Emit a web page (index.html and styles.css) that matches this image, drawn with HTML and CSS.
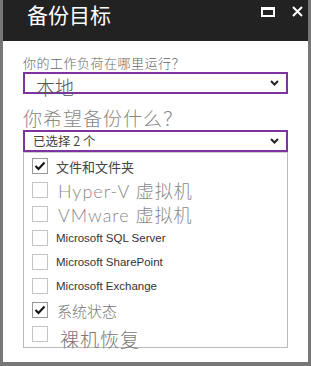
FILE: index.html
```html
<!DOCTYPE html>
<html lang="zh-CN">
<head>
    <meta charset="UTF-8" />
    <meta name="viewport" content="width=device-width, initial-scale=1.0" />
    <title>备份目标</title>
    <link rel="stylesheet" href="styles.css">
</head>
<body>
    <div class="window">
        <div class="titlebar">
            <h1>备份目标</h1>
            <div class="controls">
                <span class="maximize"></span>
                <svg class="close" width="11" height="11" viewBox="0 0 11 11">
                    <path d="M1 1 L10 10 M10 1 L1 10" stroke="#fff" stroke-width="2" fill="none" />
                </svg>
            </div>
        </div>
        <div class="content">
            <div class="label">你的工作负荷在哪里运行？</div>
            <div class="select select-big">
                <span class="value">本地</span>
                <svg class="chevron" width="9" height="6" viewBox="0 0 9 6">
                    <path d="M1 1 L4.5 4.5 L8 1" stroke="#222" stroke-width="2" fill="none" />
                </svg>
            </div>
            <div class="heading">你希望备份什么？</div>
            <div class="select select-small">
                <span class="value">已选择 2 个</span>
                <svg class="chevron" width="9" height="6" viewBox="0 0 9 6">
                    <path d="M1 1 L4.5 4.5 L8 1" stroke="#222" stroke-width="2" fill="none" />
                </svg>
            </div>
            <ul class="options">
                <li class="option checked"><span class="box"><svg width="14" height="14" viewBox="0 0 14 14"><path d="M2.5 7 L5.5 10 L11.5 3.5" stroke="#111" stroke-width="2" fill="none" /></svg></span><span class="text zh">文件和文件夹</span></li>
                <li class="option"><span class="box"></span><span class="text big">Hyper-V 虚拟机</span></li>
                <li class="option"><span class="box"></span><span class="text big">VMware 虚拟机</span></li>
                <li class="option"><span class="box"></span><span class="text en">Microsoft SQL Server</span></li>
                <li class="option"><span class="box"></span><span class="text en">Microsoft SharePoint</span></li>
                <li class="option"><span class="box"></span><span class="text en">Microsoft Exchange</span></li>
                <li class="option checked"><span class="box"><svg width="14" height="14" viewBox="0 0 14 14"><path d="M2.5 7 L5.5 10 L11.5 3.5" stroke="#111" stroke-width="2" fill="none" /></svg></span><span class="text mid">系统状态</span></li>
                <li class="option"><span class="box"></span><span class="text huge">裸机恢复</span></li>
            </ul>
        </div>
    </div>
</body>
</html>
```

FILE: styles.css
```css
body {
    margin: 0;
    padding: 0;
    background-color: #ffffff;
    font-family: "Noto Sans CJK SC", "Noto Sans", sans-serif;
}

.window {
    width: 311px;
    height: 366px;
    box-sizing: border-box;
    border: solid #777777;
    border-width: 0 3px 4px 3px;
    background-color: #ffffff;
}

.titlebar {
    height: 41px;
    background-color: #222222;
    display: flex;
    align-items: flex-start;
    padding: 0 5px 0 24px;
}

.titlebar h1 {
    margin: 0;
    font-size: 21px;
    font-weight: normal;
    line-height: 28px;
    color: #ffffff;
}

.controls {
    margin-left: auto;
    display: flex;
    align-items: flex-start;
    gap: 17px;
    padding-top: 6px;
}

.maximize {
    width: 10px;
    height: 5px;
    margin-top: 1px;
    border: 2px solid #ffffff;
    border-top-width: 3px;
}

.content {
    padding: 0 20px;
}

.label {
    margin-top: 13px;
    font-size: 13px;
    line-height: 18px;
    font-weight: 300;
    letter-spacing: 0.5px;
    color: #666666;
}

.select {
    height: 22px;
    box-sizing: border-box;
    border: 2px solid #8032a0;
    display: flex;
    align-items: center;
    padding: 0 7px 0 8px;
}

.select .chevron {
    margin-left: auto;
}

.select-big .value {
    font-size: 19px;
    line-height: 20px;
    font-weight: 300;
    margin-top: 7px;
    margin-left: 3px;
    color: #555555;
}

.select-small .value {
    font-size: 12.5px;
    line-height: 18px;
    color: #444444;
}

.heading {
    margin-top: 12px;
    font-size: 19px;
    line-height: 24px;
    font-weight: 300;
    letter-spacing: 1px;
    color: #888888;
}

.options {
    list-style: none;
    margin: 0;
    padding: 1px 0 0 8px;
    height: 193px;
    border: 1px solid #bbbbbb;
    border-top-color: #cccccc;
}

.option {
    height: 24px;
    display: flex;
    align-items: center;
    gap: 8px;
}

.box {
    width: 16px;
    height: 16px;
    box-sizing: border-box;
    border: 1px solid #c4c4c4;
    display: flex;
    align-items: center;
    justify-content: center;
    flex-shrink: 0;
}

.checked .box {
    border-color: #999999;
}

.text {
    white-space: nowrap;
}

.text.zh {
    font-size: 13px;
    color: #444444;
}

.text.big {
    font-family: Lato, "Noto Sans CJK SC", sans-serif;
    font-size: 18px;
    font-weight: 300;
    margin-left: 2px;
    letter-spacing: 1px;
    color: #8a8a8a;
}

.text.en {
    font-family: "Liberation Sans", Arial, sans-serif;
    font-size: 11.5px;
    color: #333333;
}

.text.mid {
    font-size: 15px;
    font-weight: 300;
    margin-left: 1px;
    color: #777777;
}

.text.huge {
    font-size: 19px;
    font-weight: 300;
    margin-left: 4px;
    margin-top: 8px;
    letter-spacing: 1px;
    color: #777777;
}
```
